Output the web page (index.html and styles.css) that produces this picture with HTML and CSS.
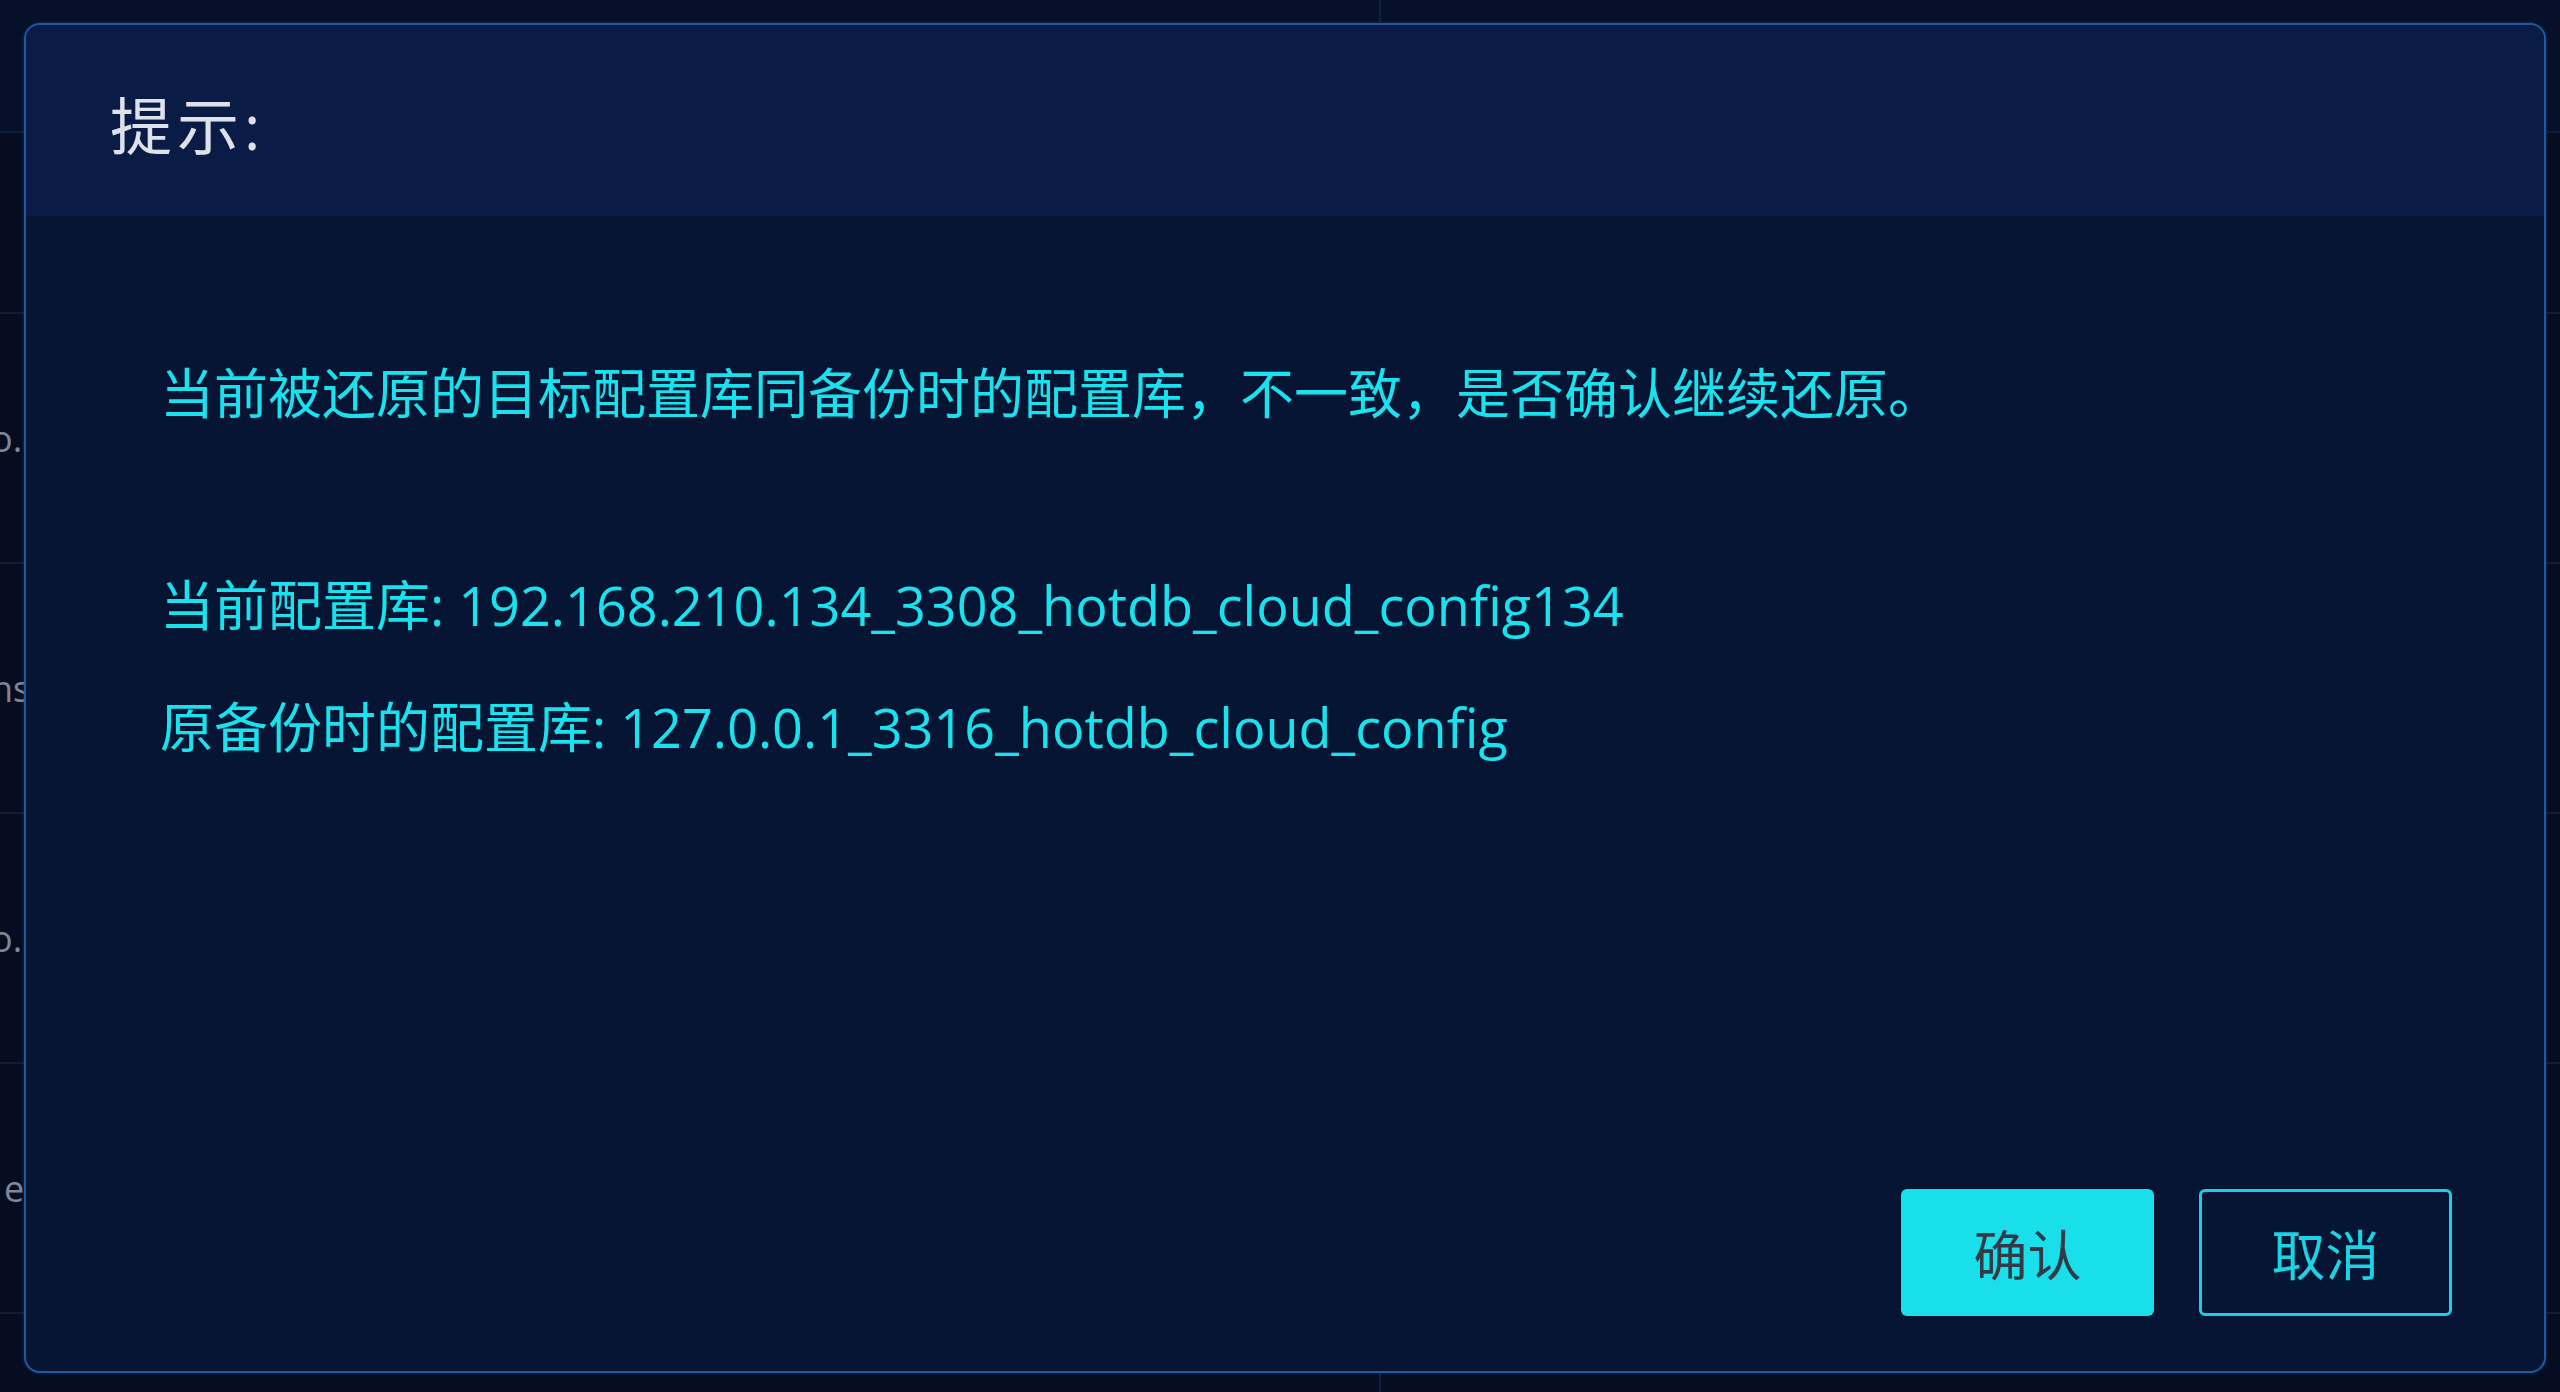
FILE: index.html
```html
<!DOCTYPE html>
<html lang="zh-CN">
<head>
<meta charset="utf-8">
<title>提示</title>
<link rel="stylesheet" href="styles.css">
</head>
<body>
<div class="page">
  <div class="table">
    <div class="row row-head"><div class="cell"></div><div class="cell"></div></div>
    <div class="row row-first"><div class="cell"></div><div class="cell"></div></div>
    <div class="row"><div class="cell"><span class="frag">o.</span></div><div class="cell"></div></div>
    <div class="row"><div class="cell"><span class="frag">ns</span></div><div class="cell"></div></div>
    <div class="row"><div class="cell"><span class="frag">o.</span></div><div class="cell"></div></div>
    <div class="row"><div class="cell"><span class="frag frag-e">e</span></div><div class="cell"></div></div>
    <div class="row row-last"><div class="cell"></div><div class="cell"></div></div>
  </div>
</div>
<div class="overlay">
  <div class="dialog">
    <div class="dialog-header">
      <span class="dialog-title">提示:</span>
    </div>
    <div class="dialog-body">
      <p class="msg msg-main">当前被还原的目标配置库同备份时的配置库，不一致，是否确认继续还原。</p>
      <p class="msg msg-info">当前配置库: 192.168.210.134_3308_hotdb_cloud_config134</p>
      <p class="msg msg-info">原备份时的配置库: 127.0.0.1_3316_hotdb_cloud_config</p>
      <div class="dialog-footer">
        <button class="btn btn-primary">确认</button>
        <button class="btn btn-ghost">取消</button>
      </div>
    </div>
  </div>
</div>
</body>
</html>
```

FILE: styles.css
```css
html, body {
  margin: 0;
  padding: 0;
  width: 2560px;
  height: 1392px;
  overflow: hidden;
  background: #060d21;
  font-family: "Open Sans", "Noto Sans CJK SC", sans-serif;
}

.page {
  width: 2560px;
  height: 1392px;
}

.table {
  display: flex;
  flex-direction: column;
  height: 100%;
}

.row {
  display: flex;
  height: 250px;
  border-bottom: 2px solid #111d36;
  box-sizing: border-box;
}

.row-head {
  height: 133px;
  background: #071029;
}

.row-first {
  height: 181px;
}

.row-last {
  flex: 1;
  border-bottom: none;
}

.cell {
  display: flex;
  align-items: center;
  box-sizing: border-box;
}

.cell:first-child {
  width: 1381px;
  border-right: 2px solid #0d2244;
}

.cell:last-child {
  flex: 1;
}

.frag {
  margin-left: -9px;
  font-size: 36px;
  color: #7f8894;
  white-space: nowrap;
}

.frag-e {
  margin-left: 4px;
}

.overlay {
  position: fixed;
  inset: 0;
  display: flex;
  padding: 23px 14px 19px 24px;
  box-sizing: border-box;
}

.dialog {
  flex: 1;
  display: flex;
  flex-direction: column;
  border: 2px solid #1d5aa0;
  border-radius: 16px;
  background: #061533;
  box-shadow: 0 0 3px rgba(20, 70, 140, 0.8);
  overflow: hidden;
}

.dialog-header {
  height: 191px;
  display: flex;
  align-items: center;
  padding-left: 84px;
  background: #0a1b45;
  flex: none;
}

.dialog-title {
  font-size: 62px;
  letter-spacing: 5px;
  color: #dde2ea;
  line-height: 1;
  margin-top: 10px;
}

.dialog-body {
  flex: 1;
  display: flex;
  flex-direction: column;
  padding: 137px 92px 55px 134px;
}

.msg {
  margin: 0;
  font-size: 54px;
  line-height: 81px;
  color: #18e2ee;
  white-space: nowrap;
}

.msg-main {
  margin-bottom: 131px;
}

.msg-info + .msg-info {
  margin-top: 41px;
}

.dialog-footer {
  margin-top: auto;
  display: flex;
  justify-content: flex-end;
  gap: 45px;
}

.btn {
  width: 253px;
  height: 127px;
  border-radius: 6px;
  font-family: "Noto Sans CJK SC", sans-serif;
  font-size: 54px;
  padding: 0;
  cursor: pointer;
  box-sizing: border-box;
}

.btn-primary {
  background: #19dfeb;
  border: none;
  color: #333a47;
}

.btn-ghost {
  background: transparent;
  border: 3px solid #1bcfe0;
  color: #1ad3e4;
}
```
